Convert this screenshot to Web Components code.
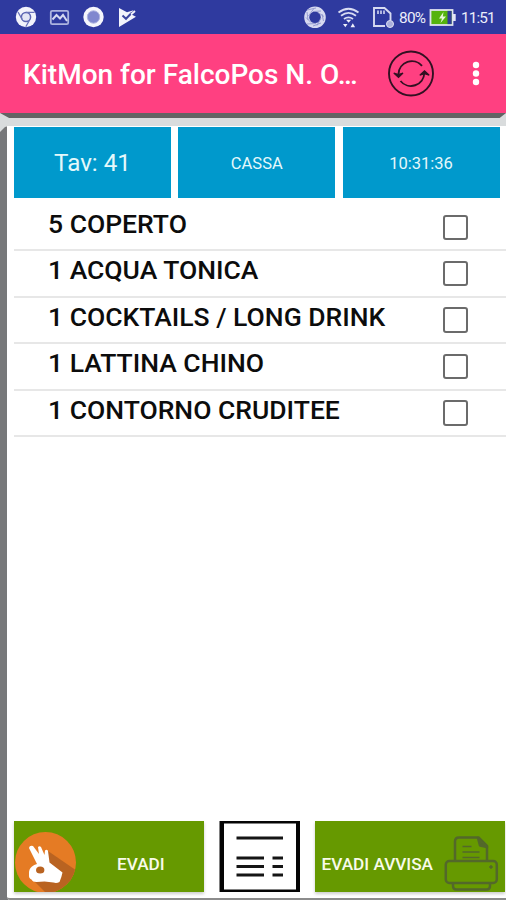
<!DOCTYPE html>
<html lang="it">
<head>
<meta charset="utf-8">
<title>KitMon for FalcoPos</title>
<style>
html,body{margin:0;padding:0;background:#fff}
body{width:506px;height:900px;overflow:hidden;font-family:Roboto,"Liberation Sans",sans-serif}
</style>
</head>
<body>
<kit-screen></kit-screen>
<script>
const define = (name, html) => customElements.define(name, class extends HTMLElement {
  connectedCallback() {
    if (this.shadowRoot) return;
    const t = document.createElement('template');
    t.innerHTML = html;
    this.attachShadow({mode: 'open'}).append(t.content.cloneNode(true));
  }
});

define('status-bar', `
<style>
:host{display:flex;height:34px;background:#2f3a9f;color:#eceefa;box-sizing:border-box;justify-content:space-between;align-items:stretch;padding-right:2px}
svg{display:block}
.right{display:flex;align-items:center}
span{font-size:15.3px;line-height:34px;white-space:nowrap;padding-top:1px;box-sizing:border-box;height:34px}
.pct{width:30px;letter-spacing:-.7px}
.time{width:43px;letter-spacing:-.9px}
</style>
<svg width="150" height="34" viewBox="0 0 150 34" fill="none">
  <circle cx="26" cy="17" r="10.200" fill="#f2f3fb"/>
  <circle cx="26" cy="17" r="4.600" fill="#e4e6f5" stroke="#5d66b3" stroke-width="1.500"/>
  <path d="M26 12.400h8.600M22.100 19.300 18 12M30 19.300l-4.200 7.400" stroke="#6a72b9" stroke-width="1.300"/>
  <rect x="50.800" y="10.800" width="17.400" height="13.400" rx="1.500" stroke="#aeb5e0" stroke-width="1.800"/>
  <path d="M52.500 19.500l4-4.500 3.500 3.500 3-3.500 4 6" stroke="#d5d9f1" stroke-width="2"/>
  <circle cx="93.500" cy="17" r="10.200" fill="#f5f6fc"/>
  <circle cx="93.500" cy="17" r="6.200" fill="#8088cf" stroke="#afb5e1"/>
  <path d="M119 8l8 4.200 6.500-2-3 3.700 5.500 2.800L119 27z" fill="#f3f4fc"/>
  <path d="M122.500 15.500l3.500 3.300 6-6.300" stroke="#3b459f" stroke-width="2"/>
  <path d="M131 14.500l4-3.500" stroke="#f3f4fc" stroke-width="1.800"/>
</svg>
<div class="right">
<svg width="109" height="34" viewBox="290 0 109 34" fill="none">
  <circle cx="315" cy="17.300" r="8.300" stroke="#d7daf1" stroke-width="5"/>
  <g stroke="#8d94cd" stroke-width=".9">
    <path d="M307 10l9-2M313 11.500l8-.5M318 12.500l6 4M322 14l1.500 7M321 18l-4 7.500M321 23l-8 3M316 23.500l-9 .5M311 22.500l-5-5M308 20l-1-8M308.500 16l5-7"/>
  </g>
  <path d="M338.500 12.500q10-7.500 20 0M341 15.700q7.500-5.500 15 0M344 19q4.500-3.400 9 0" stroke="#d9dcf3" stroke-width="1.800"/>
  <path d="M346 19.800h5.200l-2.600 3zM343 24h4.500l-2.200 3.300zM350.500 27.300l2.300-4 2.300 4z" fill="#eef0fa"/>
  <path d="M385 26h-11V8h10.500l6 5.500v7" stroke="#d7daf1" stroke-width="1.900"/>
  <path d="M378 10.500v3.500M381 10.500v3.500M384 10.500v3.500" stroke="#c9cdec" stroke-width="1.700"/>
  <circle cx="390" cy="24" r="3.500" fill="#a9afdc" stroke="#dfe1f4"/>
</svg>
<span class="pct">80%</span>
<svg width="32" height="34" viewBox="429 0 32 34">
  <rect x="430.500" y="10" width="22" height="15" fill="#55b30d" stroke="#dfe3ef" stroke-width="1.800"/>
  <rect x="447.500" y="10.900" width="4.100" height="13.200" fill="#303b98"/>
  <path d="M453 14h2.700v7H453z" fill="#e3e6f4"/>
  <path d="M443.500 12l-4.500 6.500h3l-1.500 4.500 5.500-6.500h-3.200z" fill="#e8f8d8"/>
</svg>
<span class="time">11:51</span>
</div>`);

define('app-bar', `
<style>
:host{display:flex;height:79px;background:#ff4081;align-items:center;box-sizing:border-box;padding-left:23px;color:#fff}
h1{margin:0;font-size:28px;font-weight:500;line-height:36px;white-space:nowrap;width:365px;padding-top:3px}
svg{display:block;flex:none}
</style>
<h1><slot></slot></h1>
<svg width="118" height="79" viewBox="388 34 118 79" fill="none">
  <g stroke="#321022" stroke-width="1.900">
  <circle cx="411" cy="73.500" r="22"/>
  <path d="M422 65.800A13.400 13.400 0 0 0 398.500 74"/>
  <path d="M400.500 81A13.400 13.400 0 0 0 424.300 73"/>
  </g>
  <path d="M393.800 73l4.700 1.500 4.500-1.500-4.500 4.300zM419.800 75.200l4.700-4.300 4.700 4.300-4.700-1.500z" fill="#321022" stroke="#321022" stroke-width="1.300"/>
  <g fill="#fff"><circle cx="476" cy="65" r="3.200"/><circle cx="476" cy="73.500" r="3.200"/><circle cx="476" cy="82" r="3.200"/></g>
</svg>`);

define('info-tile', `
<style>
:host{display:flex;align-items:center;justify-content:center;background:#0099cc;color:#e4f8fb;height:70.500px;font-size:16.500px;padding-top:2px;box-sizing:border-box;white-space:nowrap}
:host([large]){font-size:24.200px}
</style><slot></slot>`);

define('order-row', `
<style>
:host{display:flex;height:46.400px;box-sizing:border-box;border-bottom:2px solid #e7e7e7;padding:0 38px 0 34px;justify-content:space-between}
.name{font-size:26.500px;font-weight:500;line-height:32px;padding-top:3px;color:#0c0c0c;white-space:nowrap}
.box{width:25.500px;height:25.500px;box-sizing:border-box;border:2.400px solid #6b6b6b;border-radius:3px;margin-top:9.500px}
</style>
<span class="name"><slot></slot></span><span class="box"></span>`);

define('action-button', `
<style>
:host{display:flex;height:71px;background:#669900;color:#f8fbea;font-size:17.200px;font-weight:500;align-items:center;white-space:nowrap;box-shadow:0 2px 3px #0003}
.label{padding-top:15px}
</style>
<slot name="before"></slot><span class="label"><slot></slot></span><slot name="after"></slot>`);

define('ok-badge', `
<style>:host{display:block;width:103px;height:71px}svg{display:block}</style>
<svg width="63" height="71" viewBox="14 821 63 71">
  <defs><clipPath id="c"><circle cx="45.500" cy="862.500" r="30.500"/></clipPath></defs>
  <circle cx="45.500" cy="862.500" r="30.500" fill="#e57b24"/>
  <path clip-path="url(#c)" d="M48 851l29 20v25H49L31 878z" fill="#b96321"/>
  <path fill-rule="evenodd" fill="#fff" d="M29 848q.5-3 4-2l6 8-1-7q1.500-1.500 3 0l3.500 8 .5-4.500q2-1.500 3 .5l1.500 11.500 13 10q-1 5-3 9.500-3 1.500-6 .5l-9-1-8 .5q-4 0-5-2.500-3-1-2.500-5-.5-5.500 3-8 2-2 5-2.500zM36 870a4.200 3.600 0 1 0 8.400 0a4.200 3.600 0 1 0-8.400 0"/>
</svg>`);

define('print-icon', `
<style>:host{display:block}svg{display:block}</style>
<svg width="59" height="71" viewBox="444 821 59 71" fill="none" stroke="#53682a" stroke-width="2.500" stroke-linejoin="round">
  <path d="M455 861v-19.500q0-4 4-4h19.500l8.500 8.500V861"/>
  <path d="M478 838l9 9-7-1.500z" fill="#53682a"/>
  <rect x="445.800" y="861" width="51" height="22" rx="3.500"/>
  <path d="M453 883v3q0 3.500 3.500 3.500h30q3.500 0 3.500-3.500v-3"/>
  <path d="M462.500 846.500h9M462.500 852h17M462.500 857.500h17" stroke-width="1.700"/>
  <circle cx="491" cy="867" r="1.300" fill="#53682a" stroke-width="1"/>
</svg>`);

define('list-icon', `
<style>:host{display:block}svg{display:block}</style>
<svg width="81" height="71" viewBox="219 821 81 71">
  <path d="M219.500 821h80.500v71h-80.500zM224 823.500v66h72v-66z" fill="#050505" fill-rule="evenodd"/>
  <path d="M236.500 838H283M236.500 858H264M236.500 866.500H264M236.500 875H264M272.500 858H283M272.500 866.500H283M272.500 875H283" stroke="#151515" stroke-width="3" fill="none"/>
</svg>`);

define('order-card', `
<style>
:host{display:flex;height:787px;flex-direction:column;background:linear-gradient(#626464 0 5px,#d9dcdd 5px 13px,#ddd 13px);box-sizing:border-box;padding-top:12.500px;position:relative}
.bevel{position:absolute;left:0;top:0}
.panel{background:#fff;margin-left:7px;height:774px;border-radius:0 0 0 3px;border-bottom:2px solid #8c8c8c;box-sizing:border-box;display:flex;flex-direction:column;padding:1.500px 0 0 7px;position:relative}
.tiles{display:grid;grid-template-columns:157px 157px 157px;gap:7.300px;height:70.500px}
.rows{padding-top:7.500px;flex:1}
.actions{display:grid;grid-template-columns:190px 81px 190px;gap:15px;height:71px;margin-bottom:6px}
</style>
<svg class="bevel" width="506" height="787" viewBox="0 113 506 787">
  <path d="M0 113v17l7 6V126h3V118.500z" fill="#d9dcdd"/>
  <path d="M0 132l5-5q2-1 3 0V900H0z" fill="#77787a"/>
  <path d="M506 113v13h-10v-7.500h3z" fill="#d9dcdd"/>
</svg>
<div class="panel">
  <div class="tiles"><slot name="tile"></slot></div>
  <div class="rows"><slot></slot></div>
  <div class="actions"><slot name="action"></slot></div>
</div>`);

define('kit-screen', `
<style>
:host{display:flex;flex-direction:column;width:506px;height:900px;overflow:hidden}
.inset{width:6.500px}
print-icon{margin-left:10.500px}
</style>
<status-bar></status-bar>
<app-bar>KitMon for FalcoPos N. O…</app-bar>
<order-card>
  <info-tile slot="tile" large>Tav: 41</info-tile>
  <info-tile slot="tile">CASSA</info-tile>
  <info-tile slot="tile">10:31:36</info-tile>
  <order-row>5 COPERTO</order-row>
  <order-row>1 ACQUA TONICA</order-row>
  <order-row>1 COCKTAILS / LONG DRINK</order-row>
  <order-row>1 LATTINA CHINO</order-row>
  <order-row>1 CONTORNO CRUDITEE</order-row>
  <action-button slot="action"><ok-badge slot="before"></ok-badge>EVADI</action-button>
  <list-icon slot="action"></list-icon>
  <action-button slot="action"><span slot="before" class="inset"></span>EVADI AVVISA<print-icon slot="after"></print-icon></action-button>
</order-card>`);
</script>
</body>
</html>
